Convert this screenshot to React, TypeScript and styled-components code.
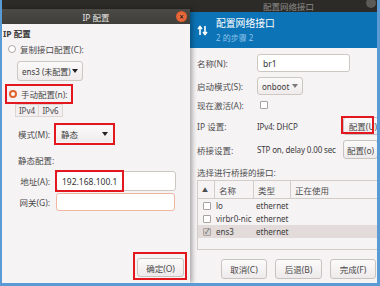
import styled, { createGlobalStyle } from 'styled-components';

const GlobalStyle = createGlobalStyle`
	* { box-sizing: border-box; }
	body {
		margin: 0;
		font-family: 'Noto Sans', 'Noto Sans CJK SC', sans-serif;
		font-size: 8.5px;
		color: #4a4a4a;
	}
`;

const Screen = styled.div`
	position: relative;
	width: 380px;
	height: 286px;
	overflow: hidden;
	background: #2c2b28;
	border-left: 2px solid #5b9bd5;
	border-right: 3px solid #5b9bd5;
	border-bottom: 3px solid #5b9bd5;
`;

/* ---------- back window (配置网络接口) ---------- */

const BackWindow = styled.div`
	position: absolute;
	left: 188px;
	top: 0;
	right: 0;
	bottom: 0;
	display: flex;
	flex-direction: column;
	background: #f6f3f5;
	overflow: hidden;
`;

const TopBar = styled.div`
	height: 12px;
	flex-shrink: 0;
	background: #2c2b28;
	color: #8d8c88;
	font-size: 8.5px;
	line-height: 11px;
	display: flex;
	align-items: center;
	justify-content: center;
	position: relative;
	padding-left: 10px;
`;

const GhostClose = styled.span`
	position: absolute;
	right: 1px;
	top: -2px;
	width: 10px;
	height: 10px;
	border-radius: 50%;
	background: #5b5a56;
`;

const Header = styled.div`
	height: 36px;
	flex-shrink: 0;
	background: #0c73b6;
	display: flex;
	align-items: center;
	padding-left: 7px;
	gap: 8px;
`;

const HeaderText = styled.div`
	display: flex;
	flex-direction: column;
	gap: 2px;
`;

const HeaderTitle = styled.div`
	color: #ffffff;
	font-size: 9.8px;
	line-height: 13px;
`;

const HeaderSub = styled.div`
	color: #8fc3ea;
	font-size: 8px;
	line-height: 11px;
`;

const Body = styled.div`
	flex: 1;
	display: flex;
	flex-direction: column;
	padding-left: 7px;
`;

const FormRow = styled.div<{ $mt: number; $h: number }>`
	display: flex;
	align-items: center;
	margin-top: ${(p) => p.$mt}px;
	height: ${(p) => p.$h}px;
	white-space: nowrap;
`;

const RowLabel = styled.span`
	width: 60px;
	flex-shrink: 0;
	color: #4d4d4d;
`;

const RowValue = styled.span<{ $w?: number }>`
	width: ${(p) => (p.$w ? `${p.$w}px` : 'auto')};
	flex-shrink: 0;
	color: #3c3c3c;
	font-size: 8px;
	letter-spacing: -0.15px;
	overflow: hidden;
`;

const TextField = styled.div<{ $w: number; $h: number; $warn?: boolean }>`
	width: ${(p) => p.$w}px;
	height: ${(p) => p.$h}px;
	flex-shrink: 0;
	background: #ffffff;
	border: 1px solid ${(p) => (p.$warn ? '#f1b6a0' : '#cdc7c2')};
	border-radius: 3px;
	display: flex;
	align-items: center;
	padding-left: 5px;
	color: #333333;
	font-size: 8.5px;
`;

const Combo = styled.div<{ $w: number; $h: number }>`
	width: ${(p) => p.$w}px;
	height: ${(p) => p.$h}px;
	flex-shrink: 0;
	background: linear-gradient(#fbfafa, #efebec);
	border: 1px solid #cdc7c2;
	border-radius: 3px;
	display: flex;
	align-items: center;
	justify-content: space-between;
	padding: 0 4px;
	color: #3c3c3c;
	font-size: 8px;
	white-space: nowrap;
`;

const Caret = styled.span<{ $muted?: boolean }>`
	width: 0;
	height: 0;
	flex-shrink: 0;
	border-left: 3px solid transparent;
	border-right: 3px solid transparent;
	border-top: 4px solid ${(p) => (p.$muted ? '#7a7a7a' : '#222222')};
`;

const Check = styled.span<{ $on?: boolean }>`
	width: 8px;
	height: 8px;
	flex-shrink: 0;
	border: 1px solid #a9a3a0;
	border-radius: 1px;
	background: ${(p) => (p.$on ? '#d8d2d0' : '#ffffff')};
	display: flex;
	align-items: center;
	justify-content: center;
	color: #555;
	font-size: 7px;
	line-height: 1;
`;

const Button = styled.div<{ $w: number; $h: number }>`
	width: ${(p) => p.$w}px;
	height: ${(p) => p.$h}px;
	flex-shrink: 0;
	background: linear-gradient(#fbfafa, #eeeaeb);
	border: 1px solid #c9c3bf;
	border-radius: 3px;
	display: flex;
	align-items: center;
	justify-content: center;
	color: #4a4a4a;
	white-space: nowrap;
`;

const Marked = styled.div`
	position: relative;
	display: flex;
`;

const RedBox = styled.span<{ $l: number; $t: number; $w: number; $h: number }>`
	position: absolute;
	left: ${(p) => p.$l}px;
	top: ${(p) => p.$t}px;
	width: ${(p) => p.$w}px;
	height: ${(p) => p.$h}px;
	border: 2px solid #e3171e;
	pointer-events: none;
`;

const Table = styled.div`
	margin-top: 1px;
	height: 70px;
	border: 1px solid #d3cdca;
	border-right: none;
	display: flex;
	flex-direction: column;
`;

const THead = styled.div`
	height: 18px;
	display: grid;
	grid-template-columns: 17px 39px 37px 1fr;
	border-bottom: 1px solid #d3cdca;
`;

const TH = styled.div`
	display: flex;
	align-items: center;
	padding-left: 4px;
	border-right: 1px solid #d3cdca;
	color: #4d4d4d;
	&:last-child {
		border-right: none;
	}
`;

const TRow = styled.div<{ $sel?: boolean }>`
	height: 13px;
	display: grid;
	grid-template-columns: 13px 40px 1fr;
	align-items: center;
	padding-left: 5px;
	background: ${(p) => (p.$sel ? '#e2dbd9' : 'transparent')};
	color: #3c3c3c;
	font-size: 8px;
	white-space: nowrap;
	&:first-of-type {
		margin-top: 4px;
	}
`;

const Footer = styled.div`
	margin-top: 9px;
	display: flex;
	gap: 8px;
	padding-left: 24px;
`;

/* ---------- front dialog (IP 配置) ---------- */

const Dialog = styled.div`
	position: absolute;
	left: 0;
	top: 9px;
	width: 188px;
	bottom: 0;
	display: flex;
	flex-direction: column;
	background: #f6f3f5;
	box-shadow: 2px 0 5px rgba(0, 0, 0, 0.35);
`;

const DialogTitle = styled.div`
	height: 15px;
	flex-shrink: 0;
	background: linear-gradient(#4b4a45, #3f3e3a);
	color: #e6e6e6;
	font-size: 8.5px;
	display: flex;
	align-items: center;
	justify-content: center;
	position: relative;
`;

const CloseDot = styled.span`
	position: absolute;
	right: 3px;
	top: 2px;
	width: 11px;
	height: 11px;
	border-radius: 50%;
	background: radial-gradient(#f07a50, #d9501f);
	color: #3a2010;
	font-size: 8px;
	line-height: 11px;
	text-align: center;
	font-weight: bold;
`;

const DialogBody = styled.div`
	flex: 1;
	display: flex;
	flex-direction: column;
	padding-left: 1px;
`;

const Heading = styled.div`
	margin-top: 4px;
	height: 12px;
	line-height: 12px;
	font-weight: bold;
	color: #3c3c3c;
`;

const Radio = styled.span<{ $on?: boolean }>`
	width: 8px;
	height: 8px;
	border-radius: 50%;
	flex-shrink: 0;
	background: #ffffff;
	border: ${(p) => (p.$on ? '2.5px solid #e0622f' : '1px solid #b0aaa7')};
`;

const RadioRow = styled.div<{ $mt: number }>`
	margin-top: ${(p) => p.$mt}px;
	height: 14px;
	display: flex;
	align-items: center;
	gap: 4px;
	padding-left: 5px;
	color: #4a4a4a;
	white-space: nowrap;
`;

const Indent = styled.div<{ $mt: number; $ml: number }>`
	margin-top: ${(p) => p.$mt}px;
	margin-left: ${(p) => p.$ml}px;
	display: flex;
`;

const RedFrame = styled.div<{ $pad: string }>`
	border: 2px solid #e3171e;
	padding: ${(p) => p.$pad};
	display: flex;
	align-items: center;
	align-self: flex-start;
`;

const Tabs = styled.div`
	display: flex;
	margin-left: 12px;
	height: 13px;
`;

const Tab = styled.div`
	width: 24px;
	border: 1px solid #dcd6d3;
	background: #f3eff1;
	display: flex;
	align-items: center;
	justify-content: center;
	font-size: 8px;
	color: #4a4a4a;
	& + & {
		border-left: none;
	}
`;

const FieldRow = styled.div<{ $mt: number; $h: number }>`
	margin-top: ${(p) => p.$mt}px;
	height: ${(p) => p.$h}px;
	display: flex;
	align-items: center;
`;

const FieldLabel = styled.span`
	width: 53px;
	text-align: right;
	padding-right: 6px;
	flex-shrink: 0;
	color: #4a4a4a;
	white-space: nowrap;
`;

const SubHeading = styled.div`
	margin-top: 9px;
	height: 14px;
	line-height: 14px;
	padding-left: 15px;
	color: #4a4a4a;
`;

const DialogFooter = styled.div`
	margin-top: auto;
	margin-bottom: 3px;
	display: flex;
	justify-content: flex-end;
	padding-right: 3px;
`;

function SwapArrows() {
	return (
		<svg width='11' height='11' viewBox='0 0 11 11' fill='none' stroke='#ffffff' strokeWidth='1.6'>
			<path d='M3 10V2M1 4l2-2.5L5 4' />
			<path d='M8 1v8M6 7l2 2.5L10 7' />
		</svg>
	);
}

export default function App() {
	return (
		<>
			<GlobalStyle />
			<Screen>
				<BackWindow>
					<TopBar>
						配置网络接口
						<GhostClose />
					</TopBar>
					<Header>
						<SwapArrows />
						<HeaderText>
							<HeaderTitle>配置网络接口</HeaderTitle>
							<HeaderSub>2 的步骤 2</HeaderSub>
						</HeaderText>
					</Header>
					<Body>
						<FormRow $mt={6} $h={18}>
							<RowLabel>名称(N):</RowLabel>
							<TextField $w={93} $h={18}>br1</TextField>
						</FormRow>
						<FormRow $mt={5} $h={18}>
							<RowLabel>启动模式(S):</RowLabel>
							<Combo $w={46} $h={18}>
								onboot <Caret $muted />
							</Combo>
						</FormRow>
						<FormRow $mt={2} $h={16}>
							<RowLabel>现在激活(A):</RowLabel>
							<Check style={{ marginLeft: 3 }} />
						</FormRow>
						<FormRow $mt={4} $h={18}>
							<RowLabel>IP 设置:</RowLabel>
							<RowValue $w={86}>IPv4: DHCP</RowValue>
							<Marked>
								<Button $w={40} $h={18}>配置(U)</Button>
								<RedBox $l={-2} $t={-1} $w={33} $h={18} />
							</Marked>
						</FormRow>
						<FormRow $mt={5} $h={19}>
							<RowLabel>桥接设置:</RowLabel>
							<RowValue $w={86}>STP on, delay 0.00 sec</RowValue>
							<Button $w={35} $h={19}>配置(o)</Button>
						</FormRow>
						<FormRow $mt={6} $h={14}>
							<RowLabel style={{ width: 'auto' }}>选择进行桥接的接口:</RowLabel>
						</FormRow>
						<Table>
							<THead>
								<TH style={{ fontSize: 6 }}>▲</TH>
								<TH>名称</TH>
								<TH>类型</TH>
								<TH>正在使用</TH>
							</THead>
							<TRow>
								<Check />
								<span>lo</span>
								<span>ethernet</span>
							</TRow>
							<TRow>
								<Check />
								<span>virbr0-nic</span>
								<span>ethernet</span>
							</TRow>
							<TRow $sel>
								<Check $on>✓</Check>
								<span>ens3</span>
								<span>ethernet</span>
							</TRow>
						</Table>
						<Footer>
							<Button $w={46} $h={20}>取消(C)</Button>
							<Button $w={47} $h={20}>后退(B)</Button>
							<Button $w={46} $h={20}>完成(F)</Button>
						</Footer>
					</Body>
				</BackWindow>

				<Dialog>
					<DialogTitle>
						IP 配置
						<CloseDot>×</CloseDot>
					</DialogTitle>
					<DialogBody>
						<Heading>IP 配置</Heading>
						<RadioRow $mt={2}>
							<Radio />
							复制接口配置(C):
						</RadioRow>
						<Indent $mt={5} $ml={14}>
							<Combo $w={66} $h={20}>
								ens3 (未配置) <Caret />
							</Combo>
						</Indent>
						<Indent $mt={3} $ml={2}>
							<RedFrame $pad='1px 3px 1px 2px'>
								<RadioRow $mt={0} style={{ paddingLeft: 0 }}>
									<Radio $on />
									手动配置(n):
								</RadioRow>
							</RedFrame>
						</Indent>
						<Tabs>
							<Tab>IPv4</Tab>
							<Tab>IPv6</Tab>
						</Tabs>
						<FieldRow $mt={6} $h={22}>
							<FieldLabel>模式(M):</FieldLabel>
							<RedFrame $pad='1px 1px 1px 1px' style={{ marginLeft: -2, width: 61 }}>
								<Combo $w={55} $h={16} style={{ border: 'none', fontSize: 8.5 }}>
									静态 <Caret />
								</Combo>
							</RedFrame>
						</FieldRow>
						<SubHeading>静态配置:</SubHeading>
						<FieldRow $mt={2} $h={22}>
							<FieldLabel>地址(A):</FieldLabel>
							<Marked>
								<TextField $w={120} $h={20}>192.168.100.1</TextField>
								<RedBox $l={-1} $t={-1} $w={69} $h={22} />
							</Marked>
						</FieldRow>
						<FieldRow $mt={1} $h={18}>
							<FieldLabel>网关(G):</FieldLabel>
							<TextField $w={119} $h={18} $warn />
						</FieldRow>
						<DialogFooter>
							<RedFrame $pad='4px 1px 1px 2px'>
								<Button $w={47} $h={19}>确定(O)</Button>
							</RedFrame>
						</DialogFooter>
					</DialogBody>
				</Dialog>
			</Screen>
		</>
	);
}
